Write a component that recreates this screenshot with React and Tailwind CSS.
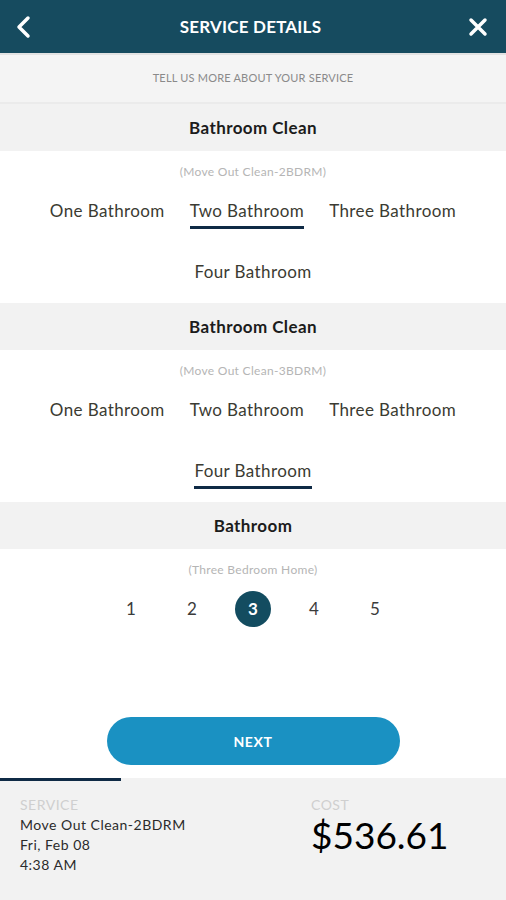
import React, { useState } from "react";

const font = { fontFamily: "Lato, 'Open Sans', sans-serif" };

function ChoiceGroup({ title, subtitle, options, selected, onSelect }) {
  return (
    <div>
      {/* SECTION HEADER */}
      <div className="h-[47px] bg-[#f2f2f2] flex items-center justify-center">
        <h2 className="text-[17px] font-bold tracking-[0.4px] text-[#1c1c1c]">{title}</h2>
      </div>
      <div className="bg-white pt-[13px] pb-[13px]">
        <p className="text-center text-[12px] tracking-[0.3px] text-[#b5b5b5] leading-[16px]">{subtitle}</p>
        <div className="mt-[19px] flex flex-wrap justify-center gap-x-[25px] gap-y-[31px] px-[30px]">
          {options.map((opt) => (
            <button
              key={opt}
              onClick={() => onSelect(opt)}
              className={`text-[17px] tracking-[0.4px] leading-[24px] text-[#3b3b32] pb-[3px] border-b-[3px] ${
                selected === opt ? "border-[#0f2a45]" : "border-transparent"
              }`}
            >
              {opt}
            </button>
          ))}
        </div>
      </div>
    </div>
  );
}

export default function App() {
  const [first, setFirst] = useState("Two Bathroom");
  const [second, setSecond] = useState("Four Bathroom");
  const [count, setCount] = useState(3);
  const opts = ["One Bathroom", "Two Bathroom", "Three Bathroom", "Four Bathroom"];

  return (
    <div className="w-[506px] h-[900px] bg-white flex flex-col overflow-hidden" style={font}>
      {/* Header */}
      <div className="h-[53px] bg-[#164b5f] flex items-center justify-between px-[14px] shrink-0">
        <svg width="20" height="24" viewBox="0 0 20 24" fill="none">
          <path d="M14 3 L5 12 L14 21" stroke="white" strokeWidth="3.5" strokeLinecap="round" strokeLinejoin="round" />
        </svg>
        <h1 className="text-white text-[17px] font-bold tracking-[0.2px]">SERVICE DETAILS</h1>
        <svg width="22" height="22" viewBox="0 0 22 22" fill="none" className="mr-[3px]">
          <path d="M4 4 L18 18 M18 4 L4 18" stroke="white" strokeWidth="3.5" strokeLinecap="round" />
        </svg>
      </div>
      <div className="h-[2px] bg-[#e2e2e2] shrink-0" />

      <div className="h-[49px] shrink-0 bg-[#f4f4f4] flex items-center justify-center border-b-[2px] border-[#ebebeb]">
        <p className="text-[11px] text-[#8a8a8a] tracking-[0.2px]">TELL US MORE ABOUT YOUR SERVICE</p>
      </div>

      <ChoiceGroup
        title="Bathroom Clean"
        subtitle="(Move Out Clean-2BDRM)"
        options={opts}
        selected={first}
        onSelect={setFirst}
      />
      <ChoiceGroup
        title="Bathroom Clean"
        subtitle="(Move Out Clean-3BDRM)"
        options={opts}
        selected={second}
        onSelect={setSecond}
      />

      {/* Bathroom count */}
      <div className="h-[47px] shrink-0 bg-[#f2f2f2] flex items-center justify-center">
        <h2 className="text-[17px] font-bold tracking-[0.4px] text-[#1c1c1c]">Bathroom</h2>
      </div>
      <div className="bg-white pt-[13px]">
        <p className="text-center text-[12px] tracking-[0.3px] text-[#b5b5b5] leading-[16px]">(Three Bedroom Home)</p>
        <div className="mt-[13px] flex justify-center gap-[25px]">
          {[1, 2, 3, 4, 5].map((n) => (
            <button
              key={n}
              onClick={() => setCount(n)}
              className={`w-[36px] h-[36px] rounded-full flex items-center justify-center text-[17px] ${
                count === n ? "bg-[#134c60] text-white font-bold" : "text-[#3b3b3b]"
              }`}
            >
              {n}
            </button>
          ))}
        </div>
      </div>

      <div className="flex-1" />

      {/* Next button */}
      <div className="flex justify-center pb-[13px]">
        <button className="w-[293px] h-[48px] rounded-full bg-[#1a91c2] text-white text-[14px] font-bold tracking-[0.6px]">
          NEXT
        </button>
      </div>

      {/* Footer */}
      <div className="h-[122px] bg-[#f2f2f2] shrink-0">
        <div className="w-[121px] h-[3px] bg-[#0f2a45]" />
        <div className="flex px-[20px] pt-[14px]">
          <div className="w-[291px]">
            <p className="text-[14px] tracking-[0.5px] leading-[20px] text-[#cfcfcf]">SERVICE</p>
            <p className="text-[14px] tracking-[0.5px] leading-[20px] text-[#2b2b2b]">Move Out Clean-2BDRM</p>
            <p className="text-[14px] tracking-[0.5px] leading-[20px] text-[#2b2b2b]">Fri, Feb 08</p>
            <p className="text-[14px] tracking-[0.5px] leading-[20px] text-[#2b2b2b]">4:38 AM</p>
          </div>
          <div>
            <p className="text-[14px] tracking-[0.5px] leading-[20px] text-[#cfcfcf]">COST</p>
            <p className="text-[37px] leading-[40px] text-black">$536.61</p>
          </div>
        </div>
      </div>
    </div>
  );
}
